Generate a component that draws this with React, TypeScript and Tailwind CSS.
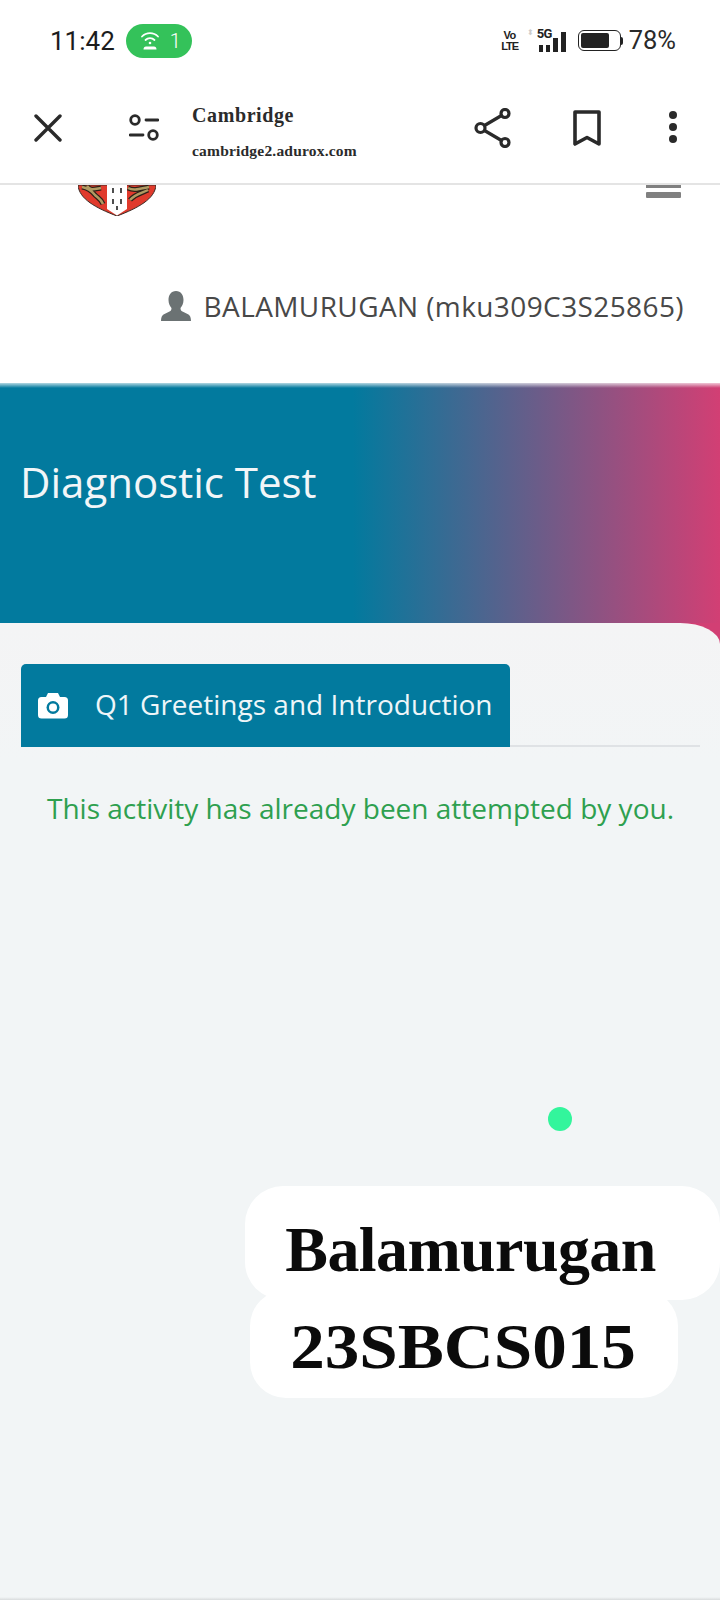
const sansFont = "font-['Open_Sans',sans-serif]"
const displayFont = "font-['Liberation_Serif',serif]"

const StatusBar = () => (
  <div className="flex h-[80px] items-center justify-between pl-[50px] pr-[44px] pt-[1px] font-['Roboto',sans-serif]">
    <div className="flex items-center gap-[11px]">
      <span className="text-[26px] leading-none text-[#1c1c1c]">11:42</span>
      <div className="flex h-[34px] w-[66px] items-center gap-[10px] rounded-full bg-[#34c25a] pl-[14px] text-white">
        <svg width="20" height="20" viewBox="0 0 20 20" fill="none" stroke="white" strokeLinecap="round">
          <path d="M2 5.500a11 11 0 0 1 16 0" strokeWidth="1.800" />
          <path d="M5.500 9a6.500 6.500 0 0 1 9 0" strokeWidth="1.800" />
          <circle cx="10" cy="12" r="1.300" fill="white" stroke="none" />
          <path d="M3.500 18.600c0-2 1-3 2.500-3h8c1.500 0 2.500 1 2.500 3z" fill="white" stroke="none" />
        </svg>
        <span className="text-[20px] font-light leading-none">1</span>
      </div>
    </div>
    <div className="flex items-center">
      <div className="flex w-[16px] flex-col items-center font-['Liberation_Sans',sans-serif] text-[11px] font-bold leading-[11px] text-[#222]">
        <span className="tracking-[-0.5px]">Vo</span>
        <span className="tracking-[-1px]">LTE</span>
      </div>
      <div className="relative ml-[18px] h-[22px] w-[31px]">
        <span className="absolute left-[1px] top-[-3px] text-[13px] font-bold leading-none tracking-[-0.5px] text-[#222]">5G</span>
        <span className="absolute left-[-9px] top-[-1px] text-[8px] leading-none text-[#ccc]">⬍</span>
        <div className="absolute bottom-0 left-[3px] flex items-end gap-[3px]">
          <div className="h-[7px] w-[4px] bg-[#222]" />
          <div className="h-[7px] w-[4px] bg-[#222]" />
          <div className="h-[14px] w-[5px] bg-[#222]" />
          <div className="h-[20px] w-[5px] bg-[#222]" />
        </div>
      </div>
      <div className="ml-[11px] flex items-center">
        <div className="flex h-[21px] w-[43px] items-center rounded-[6px] border-[1.5px] border-[#222] p-[2px]">
          <div className="h-full w-[28px] rounded-[2px] bg-[#222]" />
        </div>
        <div className="h-[8px] w-[2px] rounded-r bg-[#222]" />
      </div>
      <span className="ml-[6px] text-[25.5px] leading-none text-[#2a2a2a]">78%</span>
    </div>
  </div>
)

const Toolbar = () => (
  <div className="relative z-10 flex h-[105px] items-start border-b-2 border-[#e4e4e4] bg-white pt-[28px]">
    <svg className="ml-[34px] mt-[6px]" width="28" height="28" viewBox="0 0 28 28" fill="none" stroke="#2a2a2a" strokeWidth="3.400" strokeLinecap="round">
      <path d="M2 2l24 24M26 2L2 26" />
    </svg>
    <svg className="ml-[67px] mt-[6px]" width="30" height="27" viewBox="0 0 30 27" fill="none" stroke="#2a2a2a" strokeWidth="2.800" strokeLinecap="round">
      <circle cx="6" cy="6" r="4.300" />
      <path d="M17 6h12M1 21h13" />
      <circle cx="24" cy="21" r="4.300" />
    </svg>
    <div className={`ml-[33px] mt-[-8px] flex w-[179px] flex-col font-bold text-[#2b2b2b] ${displayFont}`}>
      <span className="text-[20px] leading-[30px] tracking-[0.6px]">Cambridge</span>
      <span className="mt-[9px] text-[15.5px] leading-[24px] tracking-[0.2px]">cambridge2.adurox.com</span>
    </div>
    <svg className="ml-[103px] mt-[0px]" width="38" height="40" viewBox="0 0 38 40" fill="none" stroke="#2a2a2a" strokeWidth="3.200">
      <circle cx="6.500" cy="20" r="4.500" />
      <circle cx="31" cy="5.500" r="4" />
      <circle cx="31" cy="34.500" r="4" />
      <path d="M10.500 17.500L27.500 7.500M10.500 22.500L27.500 32.500" />
    </svg>
    <svg className="ml-[61px] mt-[2px]" width="28" height="37" viewBox="0 0 28 37" fill="none" stroke="#2a2a2a" strokeWidth="3.600" strokeLinejoin="round">
      <path d="M2 2h24v32l-12-6.500L2 34z" />
    </svg>
    <div className="ml-[68px] mt-[3px] flex flex-col gap-[4px]">
      <div className="h-[8px] w-[8px] rounded-full bg-[#2a2a2a]" />
      <div className="h-[8px] w-[8px] rounded-full bg-[#2a2a2a]" />
      <div className="h-[8px] w-[8px] rounded-full bg-[#2a2a2a]" />
    </div>
  </div>
)

const PageHeader = () => (
  <div className="flex h-[198px] flex-col bg-white">
    <div className="flex items-start justify-between pl-[78px] pr-[39px]">
      <svg width="78" height="31" viewBox="0 0 78 31">
        <path d="M0 0h78c-1 14-18 23-39 31C18 23 1 14 0 0z" fill="#e03a2c" stroke="#3a2a24" strokeWidth="1" />
        <path d="M29 0h20v24l-10 6.500L29 24z" fill="#fff" />
        <path d="M4 2c6 1 9 3 13 8 3 3 6 4 8 9M9 1c3 5 8 3 14 2M50 3c6 3 11 1 21-1M52 15c5-6 12-7 18-10" stroke="#2e2118" strokeWidth="5" fill="none" />
        <path d="M4 2c6 1 9 3 13 8 3 3 6 4 8 9M9 1c3 5 8 3 14 2M50 3c6 3 11 1 21-1M52 15c5-6 12-7 18-10" stroke="#b09a62" strokeWidth="2.500" fill="none" />
        <path d="M35 3v5M43 3v5M35 14v5M43 14v5M39 21v4" stroke="#222" strokeWidth="1.600" />
      </svg>
      <div className="flex flex-col gap-[4px]">
        <div className="h-[3px] w-[35px] bg-[#808080]" />
        <div className="h-[6px] w-[35px] rounded-[1px] bg-[#808080]" />
      </div>
    </div>
    <div className="mt-[74px] flex items-center justify-end gap-[13px] pr-[36px]">
      <svg width="30" height="32" viewBox="0 0 30 32" fill="#6b7273">
        <path d="M15 1c5 0 7.500 4 7.500 9 0 3.500-1.500 6.500-3 8 0 2 .5 3 3 4l5 2.500c1.500 1 2.500 3 2.500 6.500H0c0-3.500 1-5.500 2.500-6.500l5-2.500c2.500-1 3-2 3-4-1.500-1.500-3-4.500-3-8 0-5 2.500-9 7.500-9z" />
      </svg>
      <span className={`text-[28px] font-medium leading-none tracking-[0.4px] text-[#484848] ${sansFont}`}>BALAMURUGAN (mku309C3S25865)</span>
    </div>
  </div>
)

const Banner = () => (
  <div className="relative h-[240px] bg-[linear-gradient(to_right,#027a9e_0%,#027a9e_49%,#d23f74_100%)] pl-[20px] pt-[71px]">
    <div className="absolute inset-x-0 top-0 h-[5px] bg-gradient-to-b from-white/70 to-transparent" />
    <h1 className={`text-[42px] font-normal leading-[56px] text-[#f2f6f8] ${sansFont}`}>Diagnostic Test</h1>
  </div>
)

const CameraIcon = () => (
  <svg width="30" height="27" viewBox="0 0 30 27">
    <path d="M10 1h10l2 4h4.500A3.500 3.500 0 0 1 30 8.500V23a3.500 3.500 0 0 1-3.500 3.500h-23A3.500 3.500 0 0 1 0 23V8.500A3.500 3.500 0 0 1 3.500 5H8z" fill="#fff" />
    <circle cx="15" cy="15.500" r="6.500" fill="#027a9e" />
    <circle cx="15" cy="15.500" r="4" fill="#fff" />
  </svg>
)

const Content = () => (
  <div className="relative flex-1">
    <div className="absolute right-0 top-0 h-[21px] w-[40px] bg-[#d23f74]" />
    <div className={`relative flex h-[977px] flex-col rounded-tr-[40px_21px] bg-[linear-gradient(to_bottom,#f4f4f5_0px,#f2f5f6_140px)] pl-[21px] pr-[20px] pt-[41px] ${sansFont}`}>
      <div className="flex h-[83px] items-end border-b-2 border-[#dfe2e5]">
        <div className="mb-[-2px] flex h-[83px] w-[489px] items-center gap-[27px] rounded-t-[5px] bg-[#027a9e] pl-[17px]">
          <CameraIcon />
          <span className="mb-[3px] text-[28px] leading-none text-[#eef6f9]">Q1 Greetings and Introduction</span>
        </div>
      </div>
      <p className="mt-[42px] text-center text-[28px] leading-[38px] text-[#2ea04f]">This activity has already been attempted by you.</p>

      <div className="mr-[128px] mt-[280px] h-[24px] w-[24px] self-end rounded-full bg-[#33f59c]" />

      <div className={`mr-[-20px] mt-[55px] flex h-[114px] w-[475px] items-center justify-center self-end rounded-[38px] bg-white pr-[24px] pt-[14px] ${displayFont}`}>
        <span className="text-[64px] font-bold leading-none tracking-[-0.6px] text-[#0b0b0b]">Balamurugan</span>
      </div>
      <div className={`relative ml-[229px] mt-[-10px] flex h-[108px] w-[428px] items-center justify-center rounded-[36px] bg-white pr-[1px] pt-[6px] ${displayFont}`}>
        <span className="scale-x-[1.08] text-[64px] font-bold leading-none text-[#0b0b0b]">23SBCS015</span>
      </div>
      <div className="absolute inset-x-0 bottom-0 h-[3px] bg-gradient-to-b from-transparent to-[#d9dcdd]" />
    </div>
  </div>
)

const App = () => {
  return (
    <div className="flex h-[1600px] w-[720px] flex-col overflow-hidden bg-white">
      <StatusBar />
      <Toolbar />
      <PageHeader />
      <Banner />
      <Content />
    </div>
  )
}

export default App
